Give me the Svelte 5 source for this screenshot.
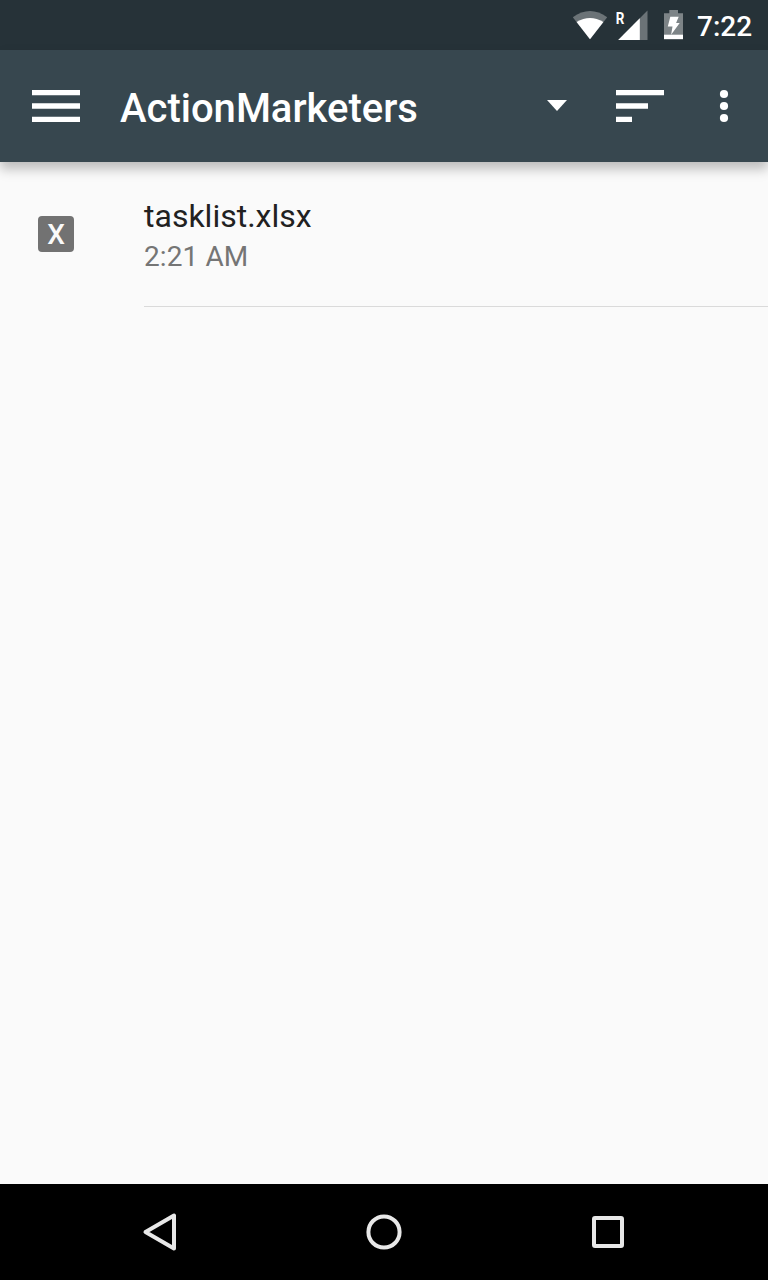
<script lang="ts">
    type FileItem = { name: string; time: string; letter: string };

    let clock: string = '7:22';
    let title: string = 'ActionMarketers';
    let files: Array<FileItem> = [
        { name: 'tasklist.xlsx', time: '2:21 AM', letter: 'X' }
    ];
</script>

<div class="screen">
    <div class="status">
        <!-- wifi, signal, battery -->
        <svg width="112" height="50" viewBox="572 0 112 50" aria-hidden="true">
            <path fill="#6b7377" d="M572.8 17.2Q590 4.8 607.2 17.2L590 39.2Z" />
            <path fill="#fff" d="M576.6 22Q590 14 603.4 22L590 39.2Z" />
            <path fill="#6b7377" d="M647.5 10.5V40H618.2Z" />
            <path fill="#fff" d="M639.8 18.3V40H618.2Z" />
            <text x="615.7" y="23.6" textLength="8.6" lengthAdjust="spacingAndGlyphs">R</text>
            <path fill="#7d8487" d="M669.3 10h8.7v3.2h5v22h-19v-22h5.3z" />
            <path fill="#fff" d="M664 34.7h19v4.5h-19z" />
            <path fill="#fff" d="M670.3 16.8h8.4l-2.6 6.3h3.6l-8.6 11.6 1.4-8.1h-4.7z" />
        </svg>
        <span class="clock">{clock}</span>
    </div>

    <header class="toolbar">
        <svg class="menu" width="64" height="64" viewBox="0 0 24 24" aria-hidden="true">
            <path d="M3 6h18v2H3zM3 11h18v2H3zM3 16h18v2H3z" />
        </svg>
        <h1>{title}</h1>
        <svg class="caret" width="20" height="11" viewBox="0 0 20 11" aria-hidden="true">
            <path d="M0 0h20L10 11z" />
        </svg>
        <svg class="sort" width="64" height="64" viewBox="0 0 24 24" aria-hidden="true">
            <path d="M3 6h18v2H3zM3 11h12v2H3zM3 16h6v2H3z" />
        </svg>
        <svg class="more" width="48" height="48" viewBox="0 0 24 24" aria-hidden="true">
            <circle cx="12" cy="6" r="2.05" />
            <circle cx="12" cy="12" r="2.05" />
            <circle cx="12" cy="18" r="2.05" />
        </svg>
    </header>

    <main>
        {#each files as file}
            <div class="row">
                <div class="badge">{file.letter}</div>
                <div class="info">
                    <div class="name">{file.name}</div>
                    <div class="time">{file.time}</div>
                </div>
            </div>
        {/each}
    </main>

    <nav>
        <svg width="48" height="48" viewBox="0 0 48 48" aria-hidden="true">
            <path d="M38 7.6V40.4L9.5 24Z" />
        </svg>
        <svg width="48" height="48" viewBox="0 0 48 48" aria-hidden="true">
            <circle cx="24" cy="24" r="15.6" />
        </svg>
        <svg width="48" height="48" viewBox="0 0 48 48" aria-hidden="true">
            <rect x="10" y="10" width="28" height="28" rx="1" />
        </svg>
    </nav>
</div>

<style>
    .screen {
        display: flex;
        flex-direction: column;
        width: 768px;
        height: 1280px;
        overflow: hidden;
        background: #fafafa;
        font-family: Roboto, sans-serif;
    }

    svg {
        display: block;
        flex: none;
    }

    .status {
        display: flex;
        height: 50px;
        padding-left: 572px;
        background: #263238;
    }

    .status text {
        fill: #fff;
        font-size: 16px;
        font-weight: 700;
    }

    .clock {
        margin-left: 13px;
        color: #fff;
        font-size: 28px;
        font-weight: 500;
        line-height: 54px;
    }

    .toolbar {
        display: flex;
        align-items: center;
        height: 112px;
        padding: 0 20px 0 24px;
        background: #37474f;
        box-shadow: 0 7px 11px rgba(0, 0, 0, 0.25);
        fill: #fff;
    }

    h1 {
        flex: 1;
        margin: 6px 0 0 32px;
        color: #fff;
        font-size: 40px;
        font-weight: 500;
        line-height: 48px;
    }

    .caret {
        margin-bottom: 1px;
    }

    .sort {
        margin-left: 41px;
    }

    .more {
        margin-left: 28px;
    }

    main {
        flex: 1;
    }

    .row {
        display: flex;
        height: 145px;
    }

    .badge {
        width: 36px;
        height: 36px;
        margin: 54px 70px 0 38px;
        border-radius: 4px;
        background: #727272;
        color: #fafafa;
        font-size: 28px;
        font-weight: 500;
        line-height: 37px;
        text-align: center;
    }

    .info {
        flex: 1;
        box-sizing: border-box;
        padding-top: 34px;
        border-bottom: 1px solid #dadada;
    }

    .name {
        color: #212121;
        font-size: 32px;
        line-height: 40px;
    }

    .time {
        color: #757575;
        font-size: 28px;
        letter-spacing: 0.1px;
        line-height: 42px;
    }

    nav {
        display: flex;
        align-items: center;
        justify-content: center;
        gap: 176px;
        height: 96px;
        background: #000;
    }

    nav svg {
        fill: none;
        stroke: #e8e8e8;
        stroke-width: 4;
        stroke-linejoin: round;
    }
</style>
